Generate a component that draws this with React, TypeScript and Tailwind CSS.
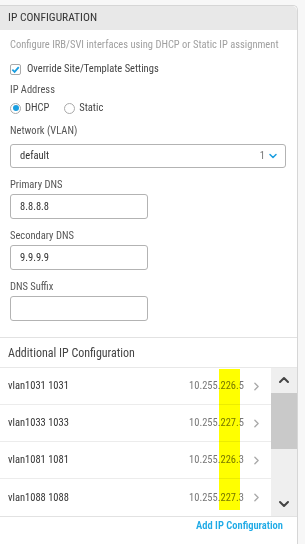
import { ChevronDown, ChevronRight, ChevronUp } from "lucide-react";

const rows = [
  { name: "vlan1031 1031", ip: "10.255.226.5" },
  { name: "vlan1033 1033", ip: "10.255.227.5" },
  { name: "vlan1081 1081", ip: "10.255.226.3" },
  { name: "vlan1088 1088", ip: "10.255.227.3" },
];

function Field({ label, value, wide }: { label: string; value: string; wide?: boolean }) {
  return (
    <div className="mt-[9px]">
      <p className="h-4 leading-4 text-[#555]">{label}</p>
      <div
        className={`mt-[1px] h-[25px] ${wide ? "w-[276px]" : "w-[138px]"} rounded-[3px] border border-[#b3b3b3] px-[9px] flex items-center text-[#333]`}
      >
        {value}
      </div>
    </div>
  );
}

export default function App() {
  return (
    <div className="w-[305px] h-[544px] bg-[#f7f7f7] pt-[5px] overflow-hidden font-['Roboto_Condensed',sans-serif] text-[10.5px]">
      <div className="relative w-[298px] h-[560px] bg-white border-t border-r border-[#d6d6d6] rounded-tr-[5px]">
        {/* Header */}
        <div className="h-[24px] bg-[#e8e8e8] rounded-tr-[5px] px-2 flex items-center text-[11.5px] text-[#333]">
          IP CONFIGURATION
        </div>

        <div className="px-[10px] pb-4 border-b border-[#e2e2e2]">
          <p className="mt-[7px] h-4 leading-4 text-[#a0a0a0] whitespace-nowrap">
            Configure IRB/SVI interfaces using DHCP or Static IP assignment
          </p>
          <label className="mt-2 h-4 flex items-center gap-[6px] text-[#444]">
            <span className="w-[11px] h-[11px] border border-[#aaa] rounded-[2px] flex items-center justify-center">
              <svg width="9" height="9" viewBox="0 0 10 10">
                <path d="M1.5 5.2 L4 7.6 L8.6 2.4" fill="none" stroke="#1a9ee0" strokeWidth="2" />
              </svg>
            </span>
            Override Site/Template Settings
          </label>
          <p className="mt-[5px] h-4 leading-4 text-[#555]">IP Address</p>
          <div className="mt-[2px] h-4 flex items-center text-[#444]">
            <span className="w-[11px] h-[11px] rounded-full border border-[#aaa] flex items-center justify-center">
              <span className="w-[6px] h-[6px] rounded-full bg-[#1a9ee0]" />
            </span>
            <span className="ml-[4px]">DHCP</span>
            <span className="ml-[15px] w-[11px] h-[11px] rounded-full border border-[#aaa]" />
            <span className="ml-[4px]">Static</span>
          </div>
          <p className="mt-[7px] h-4 leading-4 text-[#555]">Network (VLAN)</p>
          <div className="mt-[5px] h-[24px] w-[276px] rounded-[3px] border border-[#b3b3b3] pl-[9px] pr-[6px] flex items-center text-[#333]">
            <span className="flex-1">default</span>
            <span className="text-[#777]">1</span>
            <ChevronDown className="ml-[2px] text-[#1a9ee0]" size={12} strokeWidth={3} />
          </div>
          <Field label="Primary DNS" value="8.8.8.8" />
          <Field label="Secondary DNS" value="9.9.9.9" />
          <Field label="DNS Suffix" value="" />
        </div>

        {/* Additional IP configuration */}
        <div className="px-2 pt-[7px] pb-[6px] border-b border-[#e8e8e8] text-[12px] text-[#444] leading-4">
          Additional IP Configuration
        </div>
        <div className="flex border-b border-[#e2e2e2]">
          <div className="flex-1">
            {rows.map((r) => (
              <div
                key={r.name}
                className="h-[37px] flex items-center pl-2 pr-[8px] border-b border-[#ececec] last:border-b-0"
              >
                <span className="flex-1 text-[#333]">{r.name}</span>
                <span className="text-[#777]">{r.ip}</span>
                <ChevronRight className="ml-[6px] text-[#aaa]" size={13} strokeWidth={2.5} />
              </div>
            ))}
          </div>
          <div className="w-[26px] bg-[#efefef] flex flex-col items-center">
            <ChevronUp className="mt-[4px] text-[#444]" size={16} strokeWidth={3} />
            <div className="mt-[5px] w-full h-[56px] bg-[#c9c9c9]" />
            <ChevronDown className="mt-auto mb-[4px] text-[#444]" size={16} strokeWidth={3} />
          </div>
        </div>
        <div className="pr-[14px] pt-[1px] text-right text-[#1eaae6] font-semibold">
          Add IP Configuration
        </div>

        {/* highlighter annotation */}
        <div className="absolute left-[219px] top-[363px] w-[21px] h-[141px] bg-[#ffff00] mix-blend-multiply" />
      </div>
    </div>
  );
}
